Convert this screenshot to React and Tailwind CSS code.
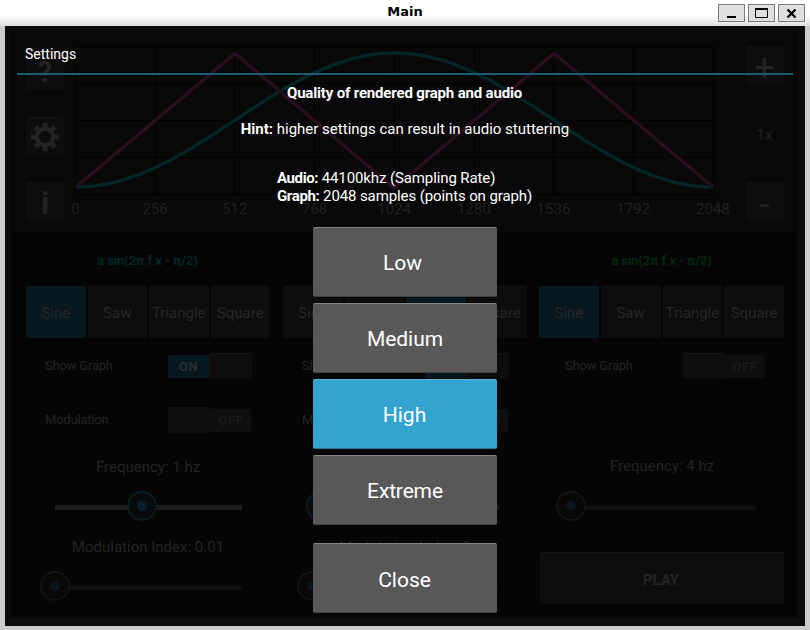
import React from "react";

function Slider({ on, thumb, className = "" }) {
  return (
    <div className={`relative ml-[29px] flex h-[30px] w-[187px] items-center ${className}`}>
      <div className={`mt-[3px] h-[5px] w-full ${on ? "bg-[#1e1e1e]" : "bg-[#0e0e0e]"}`} />
      <svg className="absolute top-0 h-[30px] w-[30px]" style={{ left: thumb - 15 }} viewBox="0 0 30 30">
        <circle cx="15" cy="15" r="14" fill={on ? "#060a0c" : "#070707"} stroke={on ? "#091c24" : "#131313"} strokeWidth="1.8" />
        <circle cx="15" cy="15" r="5" fill={on ? "#091f29" : "#08151c"} />
      </svg>
    </div>
  );
}

function Toggle({ on }) {
  const thumb = <div className="h-[26px] w-[43px] rounded-[2px] border-t border-[#131313] bg-[#0d0d0d]" />;
  return (
    <div className="flex h-[26px] w-[84px] items-center text-[13px] font-bold tracking-[0.7px]">
      {on ? (
        <>
          <div className="flex h-[23px] w-[41px] items-center justify-center rounded-l-[2px] bg-[#07181f] pt-px text-[#292d2f]">ON</div>
          {thumb}
        </>
      ) : (
        <>
          {thumb}
          <div className="flex h-[23px] w-[40px] items-center justify-center rounded-r-[2px] bg-[#0e0e0e] pt-px text-[#1b1b1b]">OFF</div>
        </>
      )}
    </div>
  );
}

function ToggleRow({ label, on, inset }) {
  return (
    <div className="flex h-[26px] items-center justify-between pr-[18px] text-[13px] text-[#242424]">
      <span className={`tracking-[-0.2px] ${inset ? "pl-[25px]" : "pl-[19px]"}`}>{label}</span>
      <Toggle on={on} />
    </div>
  );
}

function WaveButtons({ selected, className = "" }) {
  return (
    <div className={`grid h-[52px] grid-cols-4 gap-[2px] text-[15px] text-[#272727] ${className}`}>
      {["Sine", "Saw", "Triangle", "Square"].map((name) => (
        <div
          key={name}
          className={`flex items-center justify-center whitespace-nowrap rounded-[2px] border-t pt-px ${
            name === selected ? "border-[#091c24] bg-[#07181f]" : "border-[#131313] bg-[#0d0d0d]"
          }`}
        >
          <span>{name}</span>
        </div>
      ))}
    </div>
  );
}

function Formula({ className, children }) {
  return <div className={`mb-[15px] h-5 pr-px text-center text-[13px] font-bold leading-5 tracking-[-0.1px] ${className}`}>{children}</div>;
}

function SquareButton({ children, className = "" }) {
  return (
    <div className={`flex h-[38px] w-[38px] items-center justify-center rounded-[2px] border-t border-[#121212] bg-[#0d0d0d] leading-none text-[#242424] ${className}`}>
      {children}
    </div>
  );
}

const X0 = 0.5;
const STEP = 79.7;
const sine = Array.from({ length: 161 }, (_, i) => {
  const t = i / 160;
  return `${(1 + t * 637).toFixed(1)},${(74 + 67 * Math.cos(t * 2 * Math.PI)).toFixed(1)}`;
}).join(" ");

function Graph() {
  return (
    <div className="flex h-[180px] w-[640px] flex-col">
      <svg className="h-[149px] w-[640px]" viewBox="0 0 640 149" fill="none">
        {Array.from({ length: 9 }, (_, i) => (
          <line key={i} x1={Math.round(i * STEP) + X0} x2={Math.round(i * STEP) + X0} y1="0" y2="149" stroke="#010101" />
        ))}
        {[0.5, 37.5, 74.5, 111.5, 148.5].map((y) => (
          <line key={y} x1="0" x2="638" y1={y} y2={y} stroke="#010101" />
        ))}
        <polyline points={sine} stroke="#022628" strokeWidth="3.4" />
        <polyline points="1,141 160,7.5 319,142 479,7.5 638,141" stroke="#2a0d1f" strokeWidth="3.4" />
      </svg>
      <div className="-ml-[39.5px] mt-[4px] flex w-[720px] text-[15px] leading-5 text-[#202020]">
        {[0, 256, 512, 768, 1024, 1280, 1536, 1792, 2048].map((n) => (
          <span key={n} className="w-[79.7px] shrink-0 text-center">{n}</span>
        ))}
      </div>
    </div>
  );
}

function TopPanel() {
  return (
    <div className="flex h-[201px] bg-[#080808] pl-4 pt-[15px]">
      <div className="flex h-[174px] w-[38px] flex-col justify-between">
        <SquareButton className="mt-[6px] text-[29px] font-bold">
          <span className="pt-[2px]">?</span>
        </SquareButton>
        <SquareButton>
          <svg className="h-[28px] w-[28px]" viewBox="-14 -14 28 28" fill="none" stroke="currentColor">
            <circle r="8.2" strokeWidth="4" />
            {[0, 45, 90, 135, 180, 225, 270, 315].map((a) => (
              <path key={a} d="M0 -9V-14" strokeWidth="5" transform={`rotate(${a})`} />
            ))}
          </svg>
        </SquareButton>
        <SquareButton className="text-[31px] font-bold">
          <span className="pt-[3px]">i</span>
        </SquareButton>
      </div>
      <div className="ml-[11px]">
        <Graph />
      </div>
      <div className="ml-[31px] flex h-[174px] w-[38px] shrink-0 flex-col items-center justify-between text-[15px] text-[#202020]">
        <SquareButton className="text-[36px] font-normal">
          <span className="pr-px pt-[4px]">+</span>
        </SquareButton>
        <span className="pr-px pt-1">1x</span>
        <SquareButton className="text-[36px] font-normal">
          <span className="pr-px pt-[6px]">-</span>
        </SquareButton>
      </div>
    </div>
  );
}

function Column({ formula, formulaClass, wave, waveClass, graph, freq, freqThumb, index, indexThumb }) {
  return (
    <div className="w-[244px]">
      <Formula className={formulaClass}>{formula}</Formula>
      <WaveButtons selected={wave} className={waveClass} />
      <div className="mt-[15px]">
        <ToggleRow label="Show Graph" on={graph} inset={index === undefined} />
      </div>
      {index !== undefined ? (
        <>
          <div className="mt-[28px]">
            <ToggleRow label="Modulation" />
          </div>
          <div className="mt-[24px] h-5 text-center text-[15px] leading-5 text-[#242424]">{freq}</div>
          <Slider on thumb={freqThumb} className="mt-[14px]" />
          <div className="mt-[16px] h-5 text-center text-[15px] leading-5 text-[#242424]">Modulation Index: {index}</div>
          <Slider thumb={indexThumb} className="mt-[14px]" />
        </>
      ) : (
        <>
          <div className="mt-[77px] h-5 text-center text-[15px] leading-5 text-[#242424]">{freq}</div>
          <Slider thumb={freqThumb} className="mt-[15px]" />
          <div className="mt-[31px] flex h-[52px] items-center justify-center border-t border-[#151515] bg-[#0d0d0d] pr-[2px] pt-[3px] text-[15px] font-bold text-[#242424]">
            PLAY
          </div>
        </>
      )}
    </div>
  );
}

function ModalButton({ children, active, className = "" }) {
  return (
    <button
      className={`flex h-[70px] w-[184px] items-center justify-center rounded-[2px] border-b border-t text-[21px] leading-none text-white ${
        active ? "border-b-[#24789a] border-t-[#5bb5d9] bg-[#33a3d0]" : "border-b-[#404040] border-t-[#858585] bg-[#585858]"
      } ${className}`}
    >
      {children}
    </button>
  );
}

function SettingsModal() {
  return (
    <div className="absolute inset-0 flex flex-col items-center text-[15px] leading-[18px] text-white">
      <div className="flex h-[49px] w-[776px] items-center border-b-2 border-[#1c5b74] pl-2 pt-[9px] text-[14px]">Settings</div>
      <div className="mt-[9px] pr-px font-bold tracking-[-0.17px]">Quality of rendered graph and audio</div>
      <div className="mt-[18px]">
        <b>Hint:</b> higher settings can result in audio stuttering
      </div>
      <div className="mt-[31px] w-[256px] whitespace-nowrap tracking-[-0.11px]">
        <div><b className="tracking-[-0.4px]">Audio:</b> 44100khz (Sampling Rate)</div>
        <div><b className="tracking-[-0.35px]">Graph:</b> 2048 samples (points on graph)</div>
      </div>
      <div className="mt-[22px] flex flex-col gap-[6px]">
        <ModalButton className="pt-[2px]"><span className="pr-[5px]">Low</span></ModalButton>
        <ModalButton className="pt-[2px]"><span className="tracking-[-0.05px]">Medium</span></ModalButton>
        <ModalButton active className="pr-px pt-[2px]">High</ModalButton>
        <ModalButton className="pt-[2px]"><span className="tracking-[-0.15px]">Extreme</span></ModalButton>
        <ModalButton className="mt-[12px] pr-px pt-[4px]">Close</ModalButton>
      </div>
    </div>
  );
}

function WindowButton({ children }) {
  return (
    <div className="flex h-[18px] w-[27px] items-center justify-center border border-[#7b7b7b] bg-[#dfdfdf]">
      <svg className="h-[14px] w-[13px]" viewBox="0 0 13 14" fill="none" stroke="#000">{children}</svg>
    </div>
  );
}

function TitleBar() {
  return (
    <div className="flex h-[26px] items-center bg-linear-to-b from-white from-60% to-[#dedede]">
      <div className="w-[92px]" />
      <div className="flex-1 pb-[2px] text-center font-['DejaVu_Sans'] text-[13px] font-bold text-black">Main</div>
      <div className="flex w-[92px] gap-[3px]">
        <WindowButton><path d="M2 11H11" strokeWidth="2" /></WindowButton>
        <WindowButton><path d="M0 3H13" strokeWidth="2" /><path d="M.5 2V11.5H12.5V2" /></WindowButton>
        <WindowButton><path d="M2.5 3.5L10.5 11.5M10.5 3.5L2.5 11.5" strokeWidth="2.2" /></WindowButton>
      </div>
    </div>
  );
}

export default function App() {
  return (
    <div className="h-[630px] w-[810px] overflow-hidden bg-[#cccccc] font-[Roboto,sans-serif]">
      <TitleBar />
      <div className="relative mx-[5px] h-[600px] overflow-hidden bg-[#0c0c0c] pl-[5px] pr-[7px] pt-[5px]">
        <div className="h-[587px] rounded-[2px] bg-[#050505]">
          <TopPanel />
          <div className="flex gap-[13px] pl-4 pt-[19px]">
            <Column
              formula="a sin(2π f x - π/2)"
              formulaClass="text-[#022628]"
              wave="Sine"
              graph
              freq="Frequency: 1 hz"
              freqThumb={87}
              index="0.01"
              indexThumb={0}
            />
            <Column
              formula=""
              formulaClass=""
              wave="Triangle"
              graph
              freq="Frequency: 1 hz"
              freqThumb={9}
              index="0"
              indexThumb={0}
            />
            <Column
              formula="a sin(2π f x - π/2)"
              formulaClass="text-[#03280c]"
              wave="Sine"
              waveClass="-ml-px"
              freq="Frequency: 4 hz"
              freqThumb={2}
            />
          </div>
        </div>
        <SettingsModal />
      </div>
    </div>
  );
}
